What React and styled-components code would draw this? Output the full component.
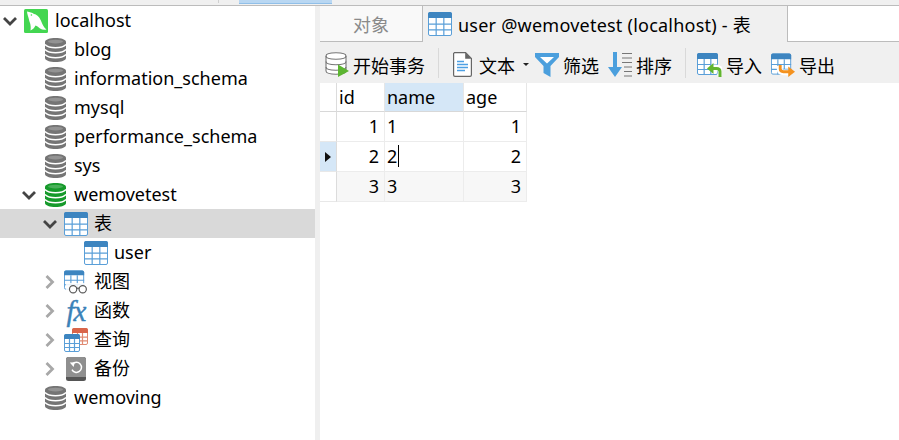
import React from "react";
import styled, { createGlobalStyle } from "styled-components";

const GlobalStyle = createGlobalStyle`
  html, body {
    margin: 0;
    padding: 0;
    background: #fff;
  }
  * {
    box-sizing: border-box;
  }
`;

const FONT = `"Noto Sans", "Noto Sans CJK SC", sans-serif`;

// icons
const DbIcon = ({ color = "#757575" }) => (
  <svg width="21" height="24" viewBox="0 0 21 24">
    <path
      d="M0 4C0 1.5 5 0 10.5 0S21 1.5 21 4V20C21 22.5 16 24 10.5 24S0 22.5 0 20Z"
      fill={color}
    />
    <g fill="none" stroke="#fff" strokeWidth="1.4">
      <path d="M0 6.5C2 9 6 9.7 10.5 9.7S19 9 21 6.5" />
      <path d="M0 11.5C2 14 6 14.7 10.5 14.7S19 14 21 11.5" />
      <path d="M0 16.5C2 19 6 19.7 10.5 19.7S19 19 21 16.5" />
    </g>
    <ellipse cx="10.5" cy="3.6" rx="7.5" ry="1.8" fill="#fff" opacity=".22" />
  </svg>
);

const TableGlyph = ({ x = 0, y = 0, w = 24, h = 24, head = "#3d85c0", line = "#5a9fd8" }) => {
  const cw = (w - 1) / 3;
  const top = Math.round(h * 0.27);
  const rh = (h - top - 1) / 3;
  return (
    <g transform={`translate(${x} ${y})`}>
      <rect x=".5" y=".5" width={w - 1} height={h - 1} rx="1.5" fill="#fff" stroke={line} />
      <path
        d={`M0 2a2 2 0 0 1 2-2H${w - 2}a2 2 0 0 1 2 2V${top}H0Z`}
        fill={head}
      />
      <g stroke={line} strokeWidth="1.2">
        <path d={`M${0.5 + cw} ${top}V${h}M${0.5 + cw * 2} ${top}V${h}`} />
        <path d={`M0 ${top + rh + 0.5}H${w}M0 ${top + rh * 2 + 0.5}H${w}`} />
      </g>
    </g>
  );
};

const TableIcon = () => (
  <svg width="24" height="24" viewBox="0 0 24 24">
    <TableGlyph />
  </svg>
);

const ViewIcon = () => (
  <svg width="25" height="24" viewBox="0 0 25 24">
    <TableGlyph w={21} h={20} />
    <rect x="2" y="13" width="23" height="11" fill="#fff" opacity=".85" />
    <g fill="#fff" stroke="#555" strokeWidth="1.2">
      <circle cx="9.5" cy="19.5" r="3.8" />
      <circle cx="19.5" cy="19.5" r="3.8" />
      <path d="M13.3 18.5h2.4" fill="none" />
    </g>
  </svg>
);

const QueryIcon = () => (
  <svg width="24" height="24" viewBox="0 0 24 24">
    <TableGlyph x={8} w={16} h={17} head="#d9654a" line="#e08a72" />
    <TableGlyph y={6} w={16} h={18} head="#3d85c0" line="#5a9fd8" />
  </svg>
);

const BackupIcon = () => (
  <svg width="20" height="24" viewBox="0 0 20 24">
    <rect width="20" height="24" rx="2.5" fill="#555" />
    <path d="M0 2.5A2.5 2.5 0 0 1 2.5 0h15A2.5 2.5 0 0 1 20 2.5V20H0Z" fill="#8f8f8f" />
    <path d="M6.6 7.2A5 5 0 1 1 6 12.6" fill="none" stroke="#fff" strokeWidth="1.5" />
    <path d="M3.8 5.6 8.8 5.2 7.6 10Z" fill="#fff" />
  </svg>
);

const DolphinLogo = () => (
  <svg width="24" height="24" viewBox="0 0 24 24">
    <rect width="24" height="24" rx="1.5" fill="#43d651" />
    <path
      d="M3 2.5C6 3 8 3.6 10 5 13.5 5.6 16 9 17.5 13 18.5 15.8 20 18.5 22.5 20.5 20 21 18 20.8 16 19.5 15 18.6 13 17 11.5 16.5 10.5 18.5 9 20.5 6.5 21.5 7 18.5 6.6 16 6 14 5 11.5 4.8 9 3.8 6.5 3.4 5 3.1 3.8 3 2.5Z"
      fill="#fff"
    />
    <circle cx="7.4" cy="6" r=".8" fill="#43d651" />
  </svg>
);

const Chevron = ({ open, muted }) => (
  <svg width="14" height="14" viewBox="0 0 14 14">
    <path
      d={open ? "M1 4 7 10 13 4" : "M3.5 1 9.5 7 3.5 13"}
      fill="none"
      stroke={muted ? "#a8a8a8" : "#444"}
      strokeWidth="2.8"
    />
  </svg>
);

const TransactionIcon = () => (
  <svg width="24" height="25" viewBox="0 0 24 25">
    <g fill="#fff" stroke="#777" strokeWidth="1.1">
      <path d="M1 4C1 2 5 .8 11 .8S21 2 21 4V19C21 21 17 22.2 11 22.2S1 21 1 19Z" />
      <path d="M1 4C1 6 5 7.2 11 7.2S21 6 21 4" fill="none" />
      <path d="M1 9.5C1 11.5 5 12.7 11 12.7S21 11.5 21 9.5" fill="none" />
      <path d="M1 15C1 17 5 18.2 11 18.2S21 17 21 15" fill="none" />
    </g>
    <path d="M13 12.5 24 19 13 25Z" fill="#5cb531" />
  </svg>
);

const DocIcon = () => (
  <svg width="19" height="25" viewBox="0 0 19 25">
    <path d="M1.5.6H12.6L18.4 6.4V23A1.4 1.4 0 0 1 17 24.4H2A1.4 1.4 0 0 1 .6 23V1.5Z" fill="#fff" stroke="#666" strokeWidth="1.2" />
    <path d="M12.2.6V6.8H18.4Z" fill="#666" />
    <path d="M4 9.5h7M4 12.5h11M4 15.5h11M4 18.5h8" stroke="#4da0e4" strokeWidth="1.3" />
  </svg>
);

const FilterIcon = () => (
  <svg width="24" height="24" viewBox="0 0 24 24">
    <path d="M0 0H24V4L15.5 13V24L8.5 20V13L0 4Z" fill="#4b9fdd" />
    <path d="M5 4H19L12 10.5Z" fill="#fff" />
  </svg>
);

const SortIcon = () => (
  <svg width="24" height="25" viewBox="0 0 24 25">
    <path d="M5 0H9V15H14L7 25 0 15H5Z" fill="#4b9fdd" />
    <path d="M14 1.5H24M14 6H24M14 10.5H24M16 15H24M16 19.5H24M16 24H24" stroke="#777" strokeWidth="1.1" />
  </svg>
);

const TransferIcon = ({ kind }) => (
  <svg width={kind === "import" ? 25 : 24} height="24" viewBox="0 0 25 24">
    <TableGlyph w={21} h={22} />
    {kind === "import" ? (
      <>
        <path d="M23.6 23V18.5C23.6 16 21.6 14.6 19 14.6H14" fill="none" stroke="#fff" strokeWidth="6" />
        <path d="M23 24V18.5C23 16.4 21.4 15.4 19.4 15.4H14" fill="none" stroke="#62b52f" strokeWidth="3" />
        <path d="M16.5 10 10 15.4 16.5 21Z" fill="#62b52f" />
      </>
    ) : (
      <>
        <path d="M9 13V16C9 18.4 10.6 19.6 13 19.6H19" fill="none" stroke="#fff" strokeWidth="6" />
        <path d="M9.6 12V16C9.6 17.8 11 19 13 19H19" fill="none" stroke="#f4921f" strokeWidth="3" />
        <path d="M18 13.5 25 19 18 24.5Z" fill="#f4921f" />
      </>
    )}
  </svg>
);

function FxIcon() {
  return <FxGlyph>fx</FxGlyph>;
}

// data
const treeRows = [
  { label: "localhost", icon: <DolphinLogo />, depth: 0, chevron: "open" },
  { label: "blog", icon: <DbIcon />, depth: 1 },
  { label: "information_schema", icon: <DbIcon />, depth: 1 },
  { label: "mysql", icon: <DbIcon />, depth: 1 },
  { label: "performance_schema", icon: <DbIcon />, depth: 1 },
  { label: "sys", icon: <DbIcon />, depth: 1 },
  { label: "wemovetest", icon: <DbIcon color="#169a2b" />, depth: 1, chevron: "open" },
  { label: "表", icon: <TableIcon />, depth: 2, chevron: "open", selected: true },
  { label: "user", icon: <TableIcon />, depth: 3 },
  { label: "视图", icon: <ViewIcon />, depth: 2, chevron: "closed" },
  { label: "函数", icon: <FxIcon />, depth: 2, chevron: "closed" },
  { label: "查询", icon: <QueryIcon />, depth: 2, chevron: "closed" },
  { label: "备份", icon: <BackupIcon />, depth: 2, chevron: "closed" },
  { label: "wemoving", icon: <DbIcon />, depth: 1 },
];

const gridRows = [
  { id: 1, name: "1", age: 1 },
  { id: 2, name: "2", age: 2, current: true },
  { id: 3, name: "3", age: 3, alt: true },
];

const App = () => (
  <Page>
    <GlobalStyle />
    <TopStrip>
      <TopMark />
      <TopHighlight />
    </TopStrip>
    <Main>
      <Sidebar>
        {treeRows.map((row) => (
          <TreeRow key={row.label} $selected={row.selected} $depth={row.depth}>
            <ChevronSlot>
              {row.chevron && (
                <Chevron open={row.chevron === "open"} muted={row.chevron === "closed"} />
              )}
            </ChevronSlot>
            <IconSlot>{row.icon}</IconSlot>
            <TreeLabel $depth={row.depth}>{row.label}</TreeLabel>
          </TreeRow>
        ))}
      </Sidebar>
      <Splitter />
      <Content>
        <TabBar>
          <Tab>对象</Tab>
          <ActiveTab>
            <TableIcon />
            <TabTitle>user @wemovetest (localhost) - 表</TabTitle>
          </ActiveTab>
          <TabBlank />
        </TabBar>
        <Toolbar>
          <ToolButton>
            <TransactionIcon />
            开始事务
          </ToolButton>
          <ToolSeparator />
          <ToolButton>
            <DocIcon />
            <ToolText>文本</ToolText>
            <Caret />
          </ToolButton>
          <ToolButton $tight>
            <FilterIcon />
            筛选
          </ToolButton>
          <ToolButton>
            <SortIcon />
            排序
          </ToolButton>
          <ToolSeparator $narrow />
          <ToolButton>
            <TransferIcon kind="import" />
            导入
          </ToolButton>
          <ToolButton>
            <TransferIcon kind="export" />
            导出
          </ToolButton>
        </Toolbar>
        <DataGrid>
          <HeaderRow>
            <IndicatorCell $header />
            <HeaderCell>id</HeaderCell>
            <HeaderCell $active>name</HeaderCell>
            <HeaderCell>age</HeaderCell>
          </HeaderRow>
          {gridRows.map((row) => (
            <DataRow key={row.id}>
              <IndicatorCell $current={row.current}>
                {row.current && <RowMarker />}
              </IndicatorCell>
              <DataCell $alt={row.alt} $number>{row.id}</DataCell>
              <DataCell $alt={row.alt}>
                {row.name}
                {row.current && <TextCursor />}
              </DataCell>
              <DataCell $alt={row.alt} $number>{row.age}</DataCell>
            </DataRow>
          ))}
        </DataGrid>
      </Content>
    </Main>
  </Page>
);

const Page = styled.div`
  width: 899px;
  height: 440px;
  overflow: hidden;
  background: #fff;
  color: #000;
  font-family: ${FONT};
  font-size: 18px;
  display: flex;
  flex-direction: column;
`;

const TopStrip = styled.div`
  height: 6px;
  flex: none;
  background: #f0f0f0;
  border-bottom: 1px solid #bcbcbc;
  display: flex;
`;

const TopMark = styled.div`
  width: 1px;
  height: 3px;
  margin-left: 218px;
  background: #d0d0d0;
`;

const TopHighlight = styled.div`
  width: 93px;
  height: 4px;
  margin-left: 20px;
  background: #b9d7f2;
  border-bottom: 1px solid #90bfe8;
`;

const Main = styled.div`
  flex: 1;
  display: flex;
  min-height: 0;
`;

const Sidebar = styled.div`
  width: 315px;
  flex: none;
  background: #fff;
`;

const Splitter = styled.div`
  width: 5px;
  flex: none;
  background: #efefef;
`;

const TreeRow = styled.div`
  height: 29px;
  display: flex;
  align-items: center;
  padding-left: ${(p) => [3, 22, 43, 63][p.$depth]}px;
  background: ${(p) => (p.$selected ? "#d9d9d9" : "transparent")};
`;

const ChevronSlot = styled.span`
  width: 21px;
  height: 14px;
  flex: none;
  display: flex;
  align-items: center;
  justify-content: flex-start;
`;

const IconSlot = styled.span`
  width: 24px;
  height: 24px;
  flex: none;
  display: flex;
  align-items: center;
  justify-content: center;
`;

const TreeLabel = styled.span`
  margin-left: ${(p) => (p.$depth < 2 ? 7 : 6)}px;
  white-space: nowrap;
  line-height: 29px;
`;

const FxGlyph = styled.span`
  font-family: "Liberation Serif", serif;
  font-style: italic;
  font-weight: 400;
  font-size: 29px;
  line-height: 24px;
  color: #3b82b8;
  letter-spacing: -1px;
  -webkit-text-stroke: 0.4px #3b82b8;
`;

const Content = styled.div`
  flex: 1;
  min-width: 0;
  display: flex;
  flex-direction: column;
`;

const TabBar = styled.div`
  height: 36px;
  flex: none;
  display: flex;
  background: #f0f0f0;
`;

const Tab = styled.div`
  width: 103px;
  display: flex;
  align-items: center;
  justify-content: center;
  background: #f9f9f9;
  color: #8a8a8a;
  border-right: 1px solid #bcbcbc;
  border-bottom: 1px solid #bcbcbc;
`;

const ActiveTab = styled.div`
  width: 364px;
  display: flex;
  align-items: center;
  gap: 6px;
  padding-left: 5px;
  white-space: nowrap;
  background: #f0f0f0;
`;

const TabTitle = styled.span`
  letter-spacing: 0.23px;
`;

const TabBlank = styled.div`
  flex: 1;
  background: #fff;
  border-left: 1px solid #bcbcbc;
  border-bottom: 1px solid #bcbcbc;
`;

const Toolbar = styled.div`
  height: 41px;
  flex: none;
  display: flex;
  align-items: center;
  gap: 9px;
  padding: 4px 0 0 5px;
  background: #f0f0f0;
`;

const ToolButton = styled.div`
  display: flex;
  align-items: center;
  gap: 4px;
  white-space: nowrap;
  margin-left: ${(p) => (p.$tight ? "-4px" : "0")};
`;

const ToolText = styled.span`
  margin-left: 3px;
`;

const Caret = styled.span`
  width: 0;
  height: 0;
  margin: 0 1px 0 4px;
  border-left: 3px solid transparent;
  border-right: 3px solid transparent;
  border-top: 3px solid #222;
`;

const ToolSeparator = styled.span`
  width: 1px;
  height: 30px;
  margin: -3px ${(p) => (p.$narrow ? 2 : 5)}px 0 4px;
  background: #d9d9d9;
`;

const DataGrid = styled.div`
  width: 207px;
  display: flex;
  flex-direction: column;
`;

const columns = "17px 48px 79px 63px";

const HeaderRow = styled.div`
  height: 29px;
  display: grid;
  grid-template-columns: ${columns};
`;

const DataRow = styled.div`
  height: 30px;
  display: grid;
  grid-template-columns: ${columns};
`;

const IndicatorCell = styled.div`
  display: flex;
  align-items: center;
  justify-content: center;
  background: ${(p) => (p.$current ? "#d5e7f7" : "#fff")};
  border-right: 1px solid #dcdcdc;
  border-bottom: 1px solid ${(p) => (p.$header ? "#d8d8d8" : "#e8e8e8")};
`;

const HeaderCell = styled.div`
  display: flex;
  align-items: center;
  padding-left: 2px;
  background: ${(p) => (p.$active ? "#d5e7f7" : "#fff")};
  border-right: 1px solid #e6e6e6;
  border-bottom: 1px solid #d8d8d8;
`;

const DataCell = styled.div`
  display: flex;
  align-items: center;
  justify-content: ${(p) => (p.$number ? "flex-end" : "flex-start")};
  padding: 0 ${(p) => (p.$number ? "5px" : "0")} 2px 2px;
  background: ${(p) => (p.$alt ? "#f7f7f7" : "#fff")};
  border-right: 1px solid #ececec;
  border-bottom: 1px solid #ececec;
`;

const RowMarker = styled.span`
  width: 0;
  height: 0;
  border-top: 5px solid transparent;
  border-bottom: 5px solid transparent;
  border-left: 6px solid #111;
`;

const TextCursor = styled.span`
  width: 1px;
  height: 22px;
  margin-left: 1px;
  background: #000;
`;

export default App;
